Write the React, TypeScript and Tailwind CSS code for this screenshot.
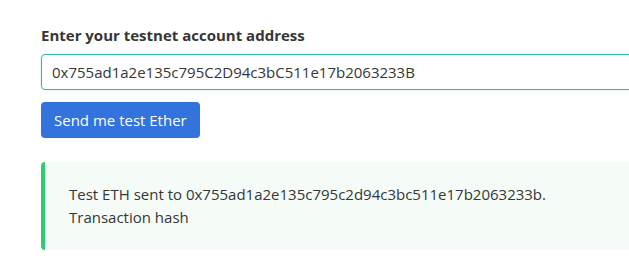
import React, { useState } from 'react';

export default function App() {
    const [address, setAddress] = useState('0x755ad1a2e135c795C2D94c3bC511e17b2063233B');

    return (
        <div className="w-[629px] h-[259px] overflow-hidden bg-white" style={{ fontFamily: '"Open Sans", "Noto Sans", sans-serif' }}>
            <div className="w-[700px] pl-[41px] pt-[24px]">
                {/* Form */}
                <label className="block text-[15px] font-bold text-[#363636] leading-[22px] mb-[8px]">
                    Enter your testnet account address
                </label>
                <input
                    type="text"
                    value={address}
                    onChange={(e) => setAddress(e.target.value)}
                    className="block w-full h-[36px] px-[10px] text-[15px] text-[#363636] bg-white border border-[#2fbcae] rounded-[4px] shadow-[0_0_0_1px_rgba(47,188,174,0.12)] outline-none"
                />
                <button className="mt-[12px] h-[36px] px-[13px] rounded-[4px] bg-[#3273dc] text-white text-[15px] leading-none">
                    Send me test Ether
                </button>

                {/* Result */}
                <div className="mt-[24px] h-[88px] flex flex-col justify-center pl-[24px] border-l-[4px] border-[#2ecc71] rounded-[4px] bg-[#f5fcf8] text-[15px] leading-[23px] text-[#363636]">
                    <p>Test ETH sent to 0x755ad1a2e135c795c2d94c3bc511e17b2063233b.</p>
                    <p>Transaction hash</p>
                </div>
            </div>
        </div>
    );
}
